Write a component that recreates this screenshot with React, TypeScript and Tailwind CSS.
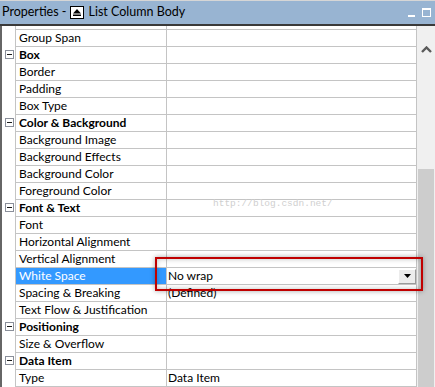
import React from 'react';

type Row = {
  label: string;
  cat?: boolean;
  value?: string;
  selected?: boolean;
};

const rows: Row[] = [
  { label: 'Group Span' },
  { label: 'Box', cat: true },
  { label: 'Border' },
  { label: 'Padding' },
  { label: 'Box Type' },
  { label: 'Color & Background', cat: true },
  { label: 'Background Image' },
  { label: 'Background Effects' },
  { label: 'Background Color' },
  { label: 'Foreground Color' },
  { label: 'Font & Text', cat: true },
  { label: 'Font' },
  { label: 'Horizontal Alignment' },
  { label: 'Vertical Alignment' },
  { label: 'White Space', value: 'No wrap', selected: true },
  { label: 'Spacing & Breaking', value: '(Defined)' },
  { label: 'Text Flow & Justification' },
  { label: 'Positioning', cat: true },
  { label: 'Size & Overflow' },
  { label: 'Data Item', cat: true },
  { label: 'Type', value: 'Data Item' },
];

const MinusBox = () => (
  <div className="w-[9px] h-[9px] border border-[#8a8f9a] bg-white flex items-center justify-center">
    <div className="w-[5px] h-[1px] bg-[#1a1a1a]" />
  </div>
);

const TitleIcon = () => (
  <svg width="14" height="13" viewBox="0 0 14 13" className="mx-[4px]">
    <rect x="0.5" y="0.5" width="13" height="12" fill="#fff" stroke="#000" />
    <polygon points="3,7.5 7,3 11,7.5" fill="#000" />
    <rect x="3" y="8.5" width="8" height="1.5" fill="#000" />
  </svg>
);

const ComboBox: React.FC<{ value: string }> = ({ value }) => (
  <div className="flex items-center h-full bg-white pl-[1px]">
    <span className="flex-1">{value}</span>
    <div className="w-[18px] h-[15px] bg-[#ececec] border-t border-l border-t-white border-l-white border-b border-r border-b-[#9a9a9a] border-r-[#9a9a9a] flex items-center justify-center">
      <svg width="7" height="4" viewBox="0 0 7 4">
        <polygon points="0,0 7,0 3.5,4" fill="#000" />
      </svg>
    </div>
  </div>
);

const PropRow: React.FC<{ row: Row }> = ({ row }) => {
  return (
    <div className="flex h-[17px]">
      <div className="w-[14px] h-full border-r border-[#c4c4c4] flex items-center justify-center pl-[1px]">
        {row.cat && <MinusBox />}
      </div>
      <div
        className={
          row.selected
            ? 'w-[151px] h-full border-t border-r border-[#c4c4c4] bg-[#3399ff] text-white pl-[3px] flex items-center whitespace-nowrap'
            : 'w-[151px] h-full border-t border-r border-[#c4c4c4] pl-[3px] flex items-center whitespace-nowrap'
        }
      >
        <span className={row.cat ? 'font-bold' : ''}>{row.label}</span>
      </div>
      <div className="w-[250px] h-full border-t border-r border-[#c4c4c4] whitespace-nowrap">
        {row.selected ? (
          <ComboBox value={row.value ?? ''} />
        ) : (
          <div className="h-full flex items-center pl-[1px]">{row.value}</div>
        )}
      </div>
    </div>
  );
};

export default function App() {
  return (
    <div
      className="relative w-[435px] h-[387px] overflow-hidden bg-white text-[12px] leading-none text-black"
      style={{ fontFamily: 'Lato, "Liberation Sans", sans-serif' }}
    >
      {/* title bar */}
      <div className="h-[26px] border-t border-[#d6d6d6] border-b-2 border-b-[#3a3a3a] bg-[#98b4d2] flex items-center pl-[2px]">
        <span className="text-[12.5px]">Properties -</span>
        <TitleIcon />
        <span className="text-[12.5px]">List Column Body</span>
        <div className="ml-auto mr-[4px] flex items-end gap-[7px] h-[9px]">
          <div className="w-[7px] h-[2px] bg-white" />
          <div className="w-[9px] h-[9px] border border-white border-t-2" />
        </div>
      </div>

      <div className="flex h-[361px]">
        <div className="w-[417px] border-l-2 border-[#666666] flex flex-col">
          <div className="flex h-[3px]">
            <div className="w-[14px] h-full border-r border-[#c4c4c4]" />
            <div className="w-[151px] h-full border-r border-[#c4c4c4]" />
            <div className="w-[250px] h-full border-r border-[#c4c4c4]" />
          </div>
          {rows.map((r) => (
            <PropRow key={r.label} row={r} />
          ))}
          <div className="flex h-[1px]">
            <div className="w-[14px] h-full border-r border-[#c4c4c4]" />
            <div className="w-[151px] h-full bg-[#c4c4c4]" />
            <div className="w-[250px] h-full bg-[#c4c4c4]" />
          </div>
        </div>

        {/* scrollbar */}
        <div className="w-[18px] bg-[#f0f0f0] flex flex-col">
          <div className="h-[143px] flex justify-center pt-[20px]">
            <svg width="11" height="7" viewBox="0 0 11 7">
              <polyline points="1,6 5.5,1.5 10,6" fill="none" stroke="#5a5a5a" strokeWidth="2.4" />
            </svg>
          </div>
          <div className="flex-1 ml-[1px] w-[16px] bg-[#cdcdcd]" />
        </div>
      </div>

      {/* highlight box */}
      <div className="absolute left-[155px] top-[257px] w-[268px] h-[34px] border-2 border-[#c00000] shadow-[0_0_5px_rgba(0,0,0,0.35),inset_0_0_5px_rgba(0,0,0,0.25)]" />

      {/* watermark */}
      <div
        className="absolute left-[213px] top-[199px] text-[9.5px] text-[#cfcfcf]"
        style={{ fontFamily: '"Liberation Mono", monospace' }}
      >
        http://blog.csdn.net/
      </div>
    </div>
  );
}
